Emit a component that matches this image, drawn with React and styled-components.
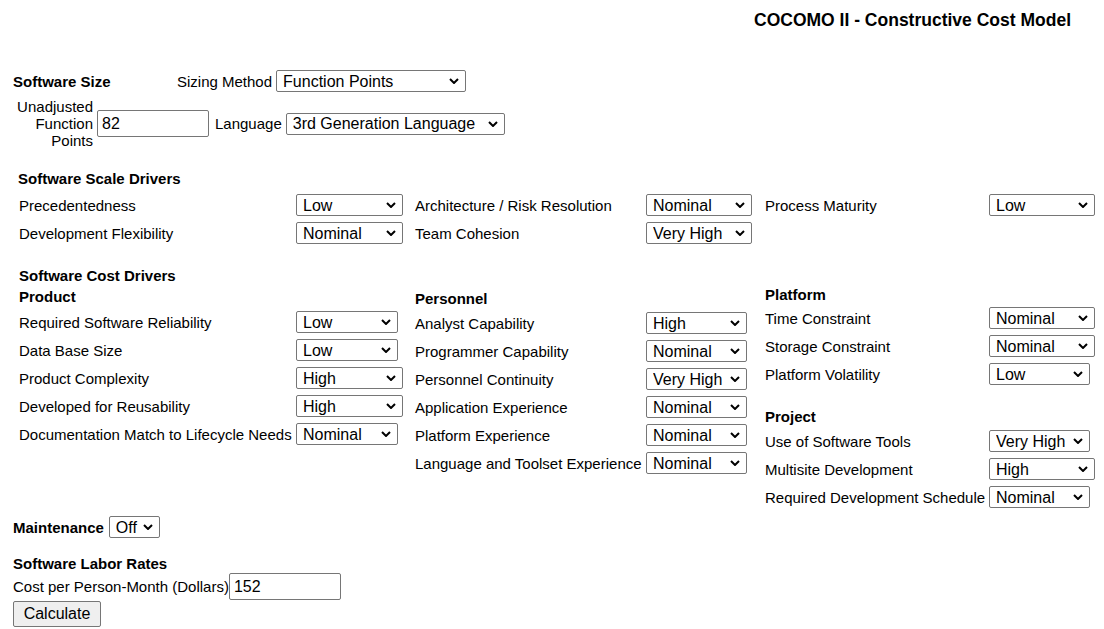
import styled, {createGlobalStyle} from 'styled-components';

const LEVELS = ['Very Low', 'Low', 'Nominal', 'High', 'Very High', 'Extra High'];
const range = (from, to) => LEVELS.slice(LEVELS.indexOf(from), LEVELS.indexOf(to) + 1);

const scaleColumns = [
  {
    label: 277,
    base: 102,
    groups: [
      {
        items: [
          {name: 'Precedentedness', value: 'Low', options: range('Very Low', 'Extra High')},
          {name: 'Development Flexibility', value: 'Nominal', options: range('Very Low', 'Extra High')},
        ],
      },
    ],
  },
  {
    label: 231,
    base: 101,
    groups: [
      {
        items: [
          {name: 'Architecture / Risk Resolution', value: 'Nominal', options: range('Very Low', 'Extra High')},
          {name: 'Team Cohesion', value: 'Very High', options: range('Very Low', 'Extra High')},
        ],
      },
    ],
  },
  {
    label: 224,
    base: 101,
    groups: [
      {
        items: [{name: 'Process Maturity', value: 'Low', options: range('Very Low', 'Extra High')}],
      },
    ],
  },
];

const costColumns = [
  {
    label: 277,
    base: 102,
    offset: 2,
    groups: [
      {
        title: 'Product',
        gap: 2,
        items: [
          {name: 'Required Software Reliability', value: 'Low', options: range('Very Low', 'Very High')},
          {name: 'Data Base Size', value: 'Low', options: range('Low', 'Very High')},
          {name: 'Product Complexity', value: 'High', options: range('Very Low', 'Extra High')},
          {name: 'Developed for Reusability', value: 'High', options: range('Low', 'Extra High')},
          {name: 'Documentation Match to Lifecycle Needs', value: 'Nominal', options: range('Very Low', 'Very High')},
        ],
      },
    ],
  },
  {
    label: 231,
    base: 101,
    offset: 4,
    groups: [
      {
        title: 'Personnel',
        gap: 1,
        items: [
          {name: 'Analyst Capability', value: 'High', options: range('Very Low', 'Very High')},
          {name: 'Programmer Capability', value: 'Nominal', options: range('Very Low', 'Very High')},
          {name: 'Personnel Continuity', value: 'Very High', options: range('Very Low', 'Very High')},
          {name: 'Application Experience', value: 'Nominal', options: range('Very Low', 'Very High')},
          {name: 'Platform Experience', value: 'Nominal', options: range('Very Low', 'Very High')},
          {name: 'Language and Toolset Experience', value: 'Nominal', options: range('Very Low', 'Very High')},
        ],
      },
    ],
  },
  {
    label: 224,
    base: 101,
    offset: 0,
    groups: [
      {
        title: 'Platform',
        gap: 0,
        items: [
          {name: 'Time Constraint', value: 'Nominal', options: range('Nominal', 'Extra High')},
          {name: 'Storage Constraint', value: 'Nominal', options: range('Nominal', 'Extra High')},
          {name: 'Platform Volatility', value: 'Low', options: range('Low', 'Very High')},
        ],
      },
      {
        title: 'Project',
        top: 20,
        gap: 1,
        items: [
          {name: 'Use of Software Tools', value: 'Very High', options: range('Very Low', 'Very High')},
          {name: 'Multisite Development', value: 'High', options: range('Very Low', 'Extra High')},
          {name: 'Required Development Schedule', value: 'Nominal', options: range('Very Low', 'Very High')},
        ],
      },
    ],
  },
];

function Dropdown({width, value, options}) {
  return (
    <SelectWrap $width={width}>
      <Select defaultValue={value}>
        {options.map(option => (
          <option key={option}>{option}</option>
        ))}
      </Select>
      <Chevron viewBox="0 0 10 6">
        <path d="M1 1l4 4 4-4" />
      </Chevron>
    </SelectWrap>
  );
}

function DriverBlock({columns}) {
  return (
    <DriverGrid>
      {columns.map((column, i) => (
        <DriverColumn key={i} $label={column.label} $offset={column.offset || 0}>
          {column.groups.map((group, j) => [
            group.title && (
              <GroupHeading key={'h' + j} $top={group.top || 0} $gap={group.gap}>
                {group.title}
              </GroupHeading>
            ),
            ...group.items.map(item => [
              <DriverLabel key={item.name}>{item.name}</DriverLabel>,
              <DriverCell key={item.name + '-s'}>
                <Dropdown
                  width={column.base + (item.options.includes('Extra High') ? 5 : 0)}
                  value={item.value}
                  options={item.options}
                />
              </DriverCell>,
            ]),
          ])}
        </DriverColumn>
      ))}
    </DriverGrid>
  );
}

export default function App() {
  return (
    <Page>
      <GlobalStyle />
      <Title>COCOMO II - Constructive Cost Model</Title>

      <SizeRow $top={40}>
        <SizeTitle>Software Size</SizeTitle>
        <FieldLabel>Sizing Method</FieldLabel>
        <Dropdown width={190} value="Function Points" options={['Function Points', 'Source Lines of Code']} />
      </SizeRow>
      <SizeRow $top={6}>
        <UfpLabel>Unadjusted Function Points</UfpLabel>
        <TextInput $left={4} defaultValue="82" />
        <FieldLabel $left={6}>Language</FieldLabel>
        <Dropdown
          width={219}
          value="3rd Generation Language"
          options={['Assembly Language', '3rd Generation Language', '4th Generation Language']}
        />
      </SizeRow>

      <SectionHeading $top={21} $left={5}>Software Scale Drivers</SectionHeading>
      <ScaleArea>
        <DriverBlock columns={scaleColumns} />
      </ScaleArea>

      <SectionHeading $top={20} $left={6}>Software Cost Drivers</SectionHeading>
      <CostArea>
        <DriverBlock columns={costColumns} />
      </CostArea>

      <MaintenanceRow>
        <BoldLabel>Maintenance</BoldLabel>
        <Dropdown width={51} value="Off" options={['Off', 'On']} />
      </MaintenanceRow>

      <SectionHeading $top={17} $left={0}>Software Labor Rates</SectionHeading>
      <LaborRow>
        <FieldLabel>Cost per Person-Month (Dollars)</FieldLabel>
        <TextInput defaultValue="152" />
      </LaborRow>
      <CalcButton type="button">Calculate</CalcButton>
    </Page>
  );
}

const GlobalStyle = createGlobalStyle`
  html, body {
    margin: 0;
    overflow: hidden;
    background: #fff;
  }
  body {
    font-family: 'Liberation Sans', Arial, sans-serif;
    color: #000;
  }
`;

const Page = styled.div`
  padding: 10px 0 0 13px;
`;

const Title = styled.div`
  margin: 0;
  padding-right: 33px;
  text-align: right;
  font-size: 17.5px;
  font-weight: 700;
  line-height: 20px;
`;

const SizeRow = styled.div`
  display: flex;
  align-items: center;
  margin-top: ${p => p.$top}px;
`;

const SizeTitle = styled.span`
  width: 164px;
  font-size: 15px;
  font-weight: 700;
`;

const FieldLabel = styled.span`
  margin-left: ${p => p.$left || 0}px;
  margin-right: 4px;
  font-size: 15px;
  white-space: nowrap;
`;

const UfpLabel = styled.span`
  width: 80px;
  text-align: right;
  font-size: 15px;
  line-height: 17px;
`;

const TextInput = styled.input`
  box-sizing: border-box;
  width: 112px;
  height: 27px;
  margin: 0 0 0 ${p => p.$left || 0}px;
  padding: 0 4px;
  border: 1px solid #767676;
  border-radius: 2px;
  font-family: 'Liberation Sans', Arial, sans-serif;
  font-size: 16px;
  color: #000;
`;

const SectionHeading = styled.div`
  margin-top: ${p => p.$top}px;
  margin-left: ${p => p.$left}px;
  font-size: 15px;
  font-weight: 700;
  line-height: 18px;
`;

const ScaleArea = styled.div`
  margin: 3px 0 0 6px;
`;

const CostArea = styled.div`
  margin: 1px 0 0 6px;
`;

const DriverGrid = styled.div`
  display: grid;
  grid-template-columns: 396px 350px 1fr;
  align-items: start;
`;

const DriverColumn = styled.div`
  display: grid;
  grid-template-columns: ${p => p.$label}px auto;
  margin-top: ${p => p.$offset}px;
`;

const GroupHeading = styled.div`
  grid-column: 1 / -1;
  margin-top: ${p => p.$top}px;
  margin-bottom: ${p => p.$gap}px;
  font-size: 15px;
  font-weight: 700;
  line-height: 18px;
`;

const DriverLabel = styled.div`
  height: 28px;
  display: flex;
  align-items: center;
  font-size: 15px;
  white-space: nowrap;
`;

const DriverCell = styled.div`
  height: 28px;
  display: flex;
  align-items: center;
`;

const SelectWrap = styled.span`
  position: relative;
  display: inline-flex;
  flex: none;
  width: ${p => p.$width}px;
  height: 22px;
`;

const Select = styled.select`
  appearance: none;
  box-sizing: border-box;
  width: 100%;
  height: 100%;
  margin: 0;
  padding: 0 20px 0 6px;
  border: 1px solid #767676;
  border-radius: 2px;
  background: #fff;
  font-family: 'Liberation Sans', Arial, sans-serif;
  font-size: 16px;
  color: #000;
`;

const Chevron = styled.svg`
  position: absolute;
  right: 7px;
  top: 50%;
  width: 10px;
  height: 6px;
  margin-top: -3px;
  fill: none;
  stroke: #000;
  stroke-width: 2;
  pointer-events: none;
`;

const MaintenanceRow = styled.div`
  display: flex;
  align-items: center;
  gap: 5px;
  margin-top: 5px;
`;

const BoldLabel = styled.span`
  font-size: 15px;
  font-weight: 700;
`;

const LaborRow = styled.div`
  display: flex;
  align-items: center;
  & > span {
    margin-right: 0;
  }
`;

const CalcButton = styled.button`
  display: block;
  box-sizing: border-box;
  width: 88px;
  height: 26px;
  margin-top: 1px;
  padding: 0;
  border: 1px solid #767676;
  border-radius: 2px;
  background: #efefef;
  font-family: 'Liberation Sans', Arial, sans-serif;
  font-size: 16px;
  color: #000;
`;
